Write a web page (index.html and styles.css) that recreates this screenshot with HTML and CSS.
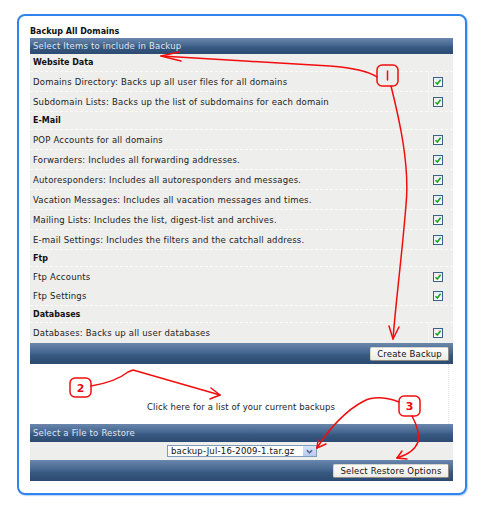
FILE: index.html
```html
<!DOCTYPE html>
<html>
<head>
<meta charset="utf-8">
<link rel="stylesheet" href="styles.css">
</head>
<body>
<div class="frame">
  <div class="title">Backup All Domains</div>
  <div class="panel">
    <div class="bar head">Select Items to include in Backup</div>
    <div class="row sec">Website Data</div>
    <div class="row"><span class="label">Domains Directory: Backs up all user files for all domains</span><span class="chk"><span class="cb"><svg viewBox="0 0 8 8"><path d="M1.5 4.2 L3.3 6 L6.6 1.8"/></svg></span></span></div>
    <div class="row"><span class="label">Subdomain Lists: Backs up the list of subdomains for each domain</span><span class="chk"><span class="cb"><svg viewBox="0 0 8 8"><path d="M1.5 4.2 L3.3 6 L6.6 1.8"/></svg></span></span></div>
    <div class="row sec">E-Mail</div>
    <div class="row"><span class="label">POP Accounts for all domains</span><span class="chk"><span class="cb"><svg viewBox="0 0 8 8"><path d="M1.5 4.2 L3.3 6 L6.6 1.8"/></svg></span></span></div>
    <div class="row"><span class="label">Forwarders: Includes all forwarding addresses.</span><span class="chk"><span class="cb"><svg viewBox="0 0 8 8"><path d="M1.5 4.2 L3.3 6 L6.6 1.8"/></svg></span></span></div>
    <div class="row"><span class="label">Autoresponders: Includes all autoresponders and messages.</span><span class="chk"><span class="cb"><svg viewBox="0 0 8 8"><path d="M1.5 4.2 L3.3 6 L6.6 1.8"/></svg></span></span></div>
    <div class="row"><span class="label">Vacation Messages: Includes all vacation messages and times.</span><span class="chk"><span class="cb"><svg viewBox="0 0 8 8"><path d="M1.5 4.2 L3.3 6 L6.6 1.8"/></svg></span></span></div>
    <div class="row"><span class="label">Mailing Lists: Includes the list, digest-list and archives.</span><span class="chk"><span class="cb"><svg viewBox="0 0 8 8"><path d="M1.5 4.2 L3.3 6 L6.6 1.8"/></svg></span></span></div>
    <div class="row"><span class="label">E-mail Settings: Includes the filters and the catchall address.</span><span class="chk"><span class="cb"><svg viewBox="0 0 8 8"><path d="M1.5 4.2 L3.3 6 L6.6 1.8"/></svg></span></span></div>
    <div class="row sec short">Ftp</div>
    <div class="row nosep"><span class="label">Ftp Accounts</span><span class="chk"><span class="cb"><svg viewBox="0 0 8 8"><path d="M1.5 4.2 L3.3 6 L6.6 1.8"/></svg></span></span></div>
    <div class="row"><span class="label">Ftp Settings</span><span class="chk"><span class="cb"><svg viewBox="0 0 8 8"><path d="M1.5 4.2 L3.3 6 L6.6 1.8"/></svg></span></span></div>
    <div class="row sec short">Databases</div>
    <div class="row last"><span class="label">Databases: Backs up all user databases</span><span class="chk"><span class="cb"><svg viewBox="0 0 8 8"><path d="M1.5 4.2 L3.3 6 L6.6 1.8"/></svg></span></span></div>
    <div class="bar foot"><span class="btn btn-create">Create Backup</span></div>
  </div>
  <div class="middle">
    <span class="link">Click here for a list of your current backups</span>
  </div>
  <div class="panel">
    <div class="bar head head2">Select a File to Restore</div>
    <div class="selrow">
      <span class="select"><span class="seltext">backup-Jul-16-2009-1.tar.gz</span><span class="selbtn"><svg viewBox="0 0 10 8"><path d="M2 2.5 L5 5.5 L8 2.5"/></svg></span></span>
    </div>
    <div class="bar foot foot2"><span class="btn btn-restore">Select Restore Options</span></div>
  </div>
</div>
<svg class="notes" viewBox="0 0 490 514" width="490" height="514">
  <g class="ink">
    <rect x="377" y="65" width="21" height="21" rx="5"/>
    <path d="M377 77 Q366 69 330 66 L245 61 L161 56"/>
    <path d="M179 52 L161 56 L181 61"/>
    <path d="M391 86 C399 118 410 165 406 205 C402 255 396 300 393 339"/>
    <path d="M389 326 L393 339 L399 327"/>
    <path d="M387.5 71 L387.5 80"/>
    <rect x="70" y="378" width="21" height="19" rx="5"/>
    <path d="M91 386 C103 384 118 380 128 372 L133 370 L220 395"/>
    <path d="M211 388 L220 395 L210 399"/>
    <rect x="399" y="396" width="21" height="20" rx="5"/>
    <path d="M399 402 C388 398 374 396 364 401 C346 410 328 430 317 448"/>
    <path d="M318 440 L317 448 L326 444"/>
    <path d="M412 416 C417 425 420 436 418 442 C415 450 407 455 397 458"/>
    <path d="M402 451 L397 458 L407 459"/>
  </g>
  <text class="num" x="80.5" y="391.5">2</text>
  <text class="num" x="409.5" y="410">3</text>
</svg>
</body>
</html>
```
FILE: styles.css
```css
html, body {
  margin: 0;
  padding: 0;
  background: #ffffff;
}
body {
  width: 490px;
  height: 514px;
  position: relative;
  font-family: "DejaVu Sans", Verdana, sans-serif;
  font-size: 8.5px;
  color: #222;
}
.frame {
  margin: 14px 0 0 17px;
  width: 450px;
  height: 481px;
  box-sizing: border-box;
  border: 2px solid #2f84ee;
  border-radius: 8px;
  padding: 10px 12px 0 11px;
  box-shadow: 1px 1px 1px #b9d4f5;
}
.title {
  font-weight: bold;
  font-size: 8px;
  color: #111;
  height: 12px;
  line-height: 12px;
}
.panel {
  width: 423px;
  background: #eeeeec;
}
.bar {
  background: linear-gradient(#6a87ad 0%, #46678f 45%, #375880 60%, #2c4a72 100%);
  display: flex;
  align-items: center;
}
.head {
  height: 16px;
  color: #dfe6ef;
  padding-left: 3px;
  letter-spacing: 0.2px;
}
.head2 {
  height: 18px;
}
.row {
  display: flex;
  align-items: stretch;
  height: 19px;
  border-bottom: 1px dashed #fbfbf8;
  letter-spacing: 0.2px;
}
.row.nosep {
  border-bottom: none;
}
.row.last {
  height: 20px;
  border-bottom: none;
}
.row.sec {
  height: 17px;
  align-items: center;
  padding-left: 3px;
  font-weight: bold;
  font-size: 8px;
  color: #111;
  letter-spacing: 0;
}
.row.sec.short {
  height: 16px;
}
.label {
  flex: 1;
  display: flex;
  align-items: center;
  padding-left: 3px;
}
.chk {
  width: 25px;
  box-sizing: border-box;
  border-left: 1px dotted #fbfbf8;
  display: flex;
  align-items: center;
  padding-left: 4px;
}
.cb {
  width: 10px;
  height: 10px;
  box-sizing: border-box;
  border: 1px solid #3d5f8c;
  background: linear-gradient(#e8ecf0, #ffffff);
  display: flex;
}
.cb svg {
  width: 8px;
  height: 8px;
}
.cb path {
  fill: none;
  stroke: #1ea51e;
  stroke-width: 1.6;
}
.foot {
  height: 21px;
  justify-content: flex-end;
  padding-right: 4px;
}
.btn {
  height: 14px;
  box-sizing: border-box;
  background: linear-gradient(#fdfdfb, #ecebe3);
  border: 1px solid #d7d5cb;
  border-right-color: #8e8c84;
  border-bottom-color: #8e8c84;
  border-radius: 2px;
  display: flex;
  align-items: center;
  justify-content: center;
  color: #111;
  letter-spacing: 0.2px;
}
.btn-create {
  width: 79px;
}
.btn-restore {
  width: 116px;
}
.middle {
  height: 60px;
  width: 419px;
  box-sizing: border-box;
  border-right: 1px dotted #e4e4e4;
  display: flex;
  align-items: flex-end;
  justify-content: center;
  padding-bottom: 12px;
}
.link {
  color: #222;
  letter-spacing: 0.1px;
  padding-left: 4px;
}
.selrow {
  height: 18px;
  display: flex;
  align-items: center;
  justify-content: center;
  padding-left: 1px;
}
.select {
  width: 150px;
  height: 12px;
  box-sizing: border-box;
  border: 1px solid #7f9db9;
  background: #fff;
  display: flex;
  align-items: center;
}
.seltext {
  flex: 1;
  padding-left: 3px;
  color: #111;
  letter-spacing: 0.2px;
  line-height: 10px;
}
.selbtn {
  width: 13px;
  height: 10px;
  background: linear-gradient(#d6e2f7, #b7cbef);
  border-left: 1px solid #fff;
  display: flex;
  align-items: center;
  justify-content: center;
}
.selbtn svg {
  width: 9px;
  height: 7px;
}
.selbtn path {
  fill: none;
  stroke: #4d6185;
  stroke-width: 1.6;
}
.foot2 {
  height: 21px;
}
.notes {
  position: absolute;
  left: 0;
  top: 0;
  pointer-events: none;
}
.ink rect, .ink path {
  fill: none;
  stroke: #f20d0d;
  stroke-width: 1.5;
  stroke-linecap: round;
  stroke-linejoin: round;
}
.num {
  fill: #e80c0c;
  font-family: "DejaVu Sans", sans-serif;
  font-size: 11px;
  font-weight: bold;
  text-anchor: middle;
}
```
